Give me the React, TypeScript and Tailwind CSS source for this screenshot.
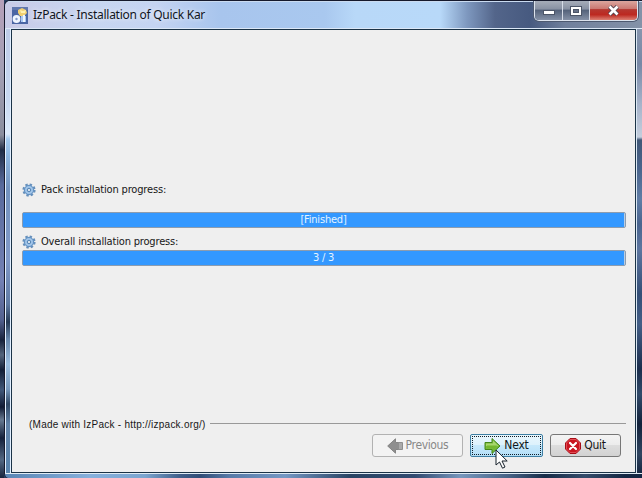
import React from 'react';

const uiFont = "font-['DejaVu_Sans_Condensed','DejaVu_Sans',sans-serif]";

function AppIcon() {
  return (
    <svg width="16" height="17" viewBox="0 0 16 17" className="shrink-0">
      <rect width="16" height="17" fill="#4a66a4" />
      <path d="M0 0h16v3H0z" fill="#6178ae" />
      <path d="M6 3l4-2 4 2 1 3-3 3H8L6 6z" fill="#f0cf72" />
      <path d="M8 3l3 1 3-1-1 3H9z" fill="#fff0ae" />
      <circle cx="4.5" cy="12" r="3.9" fill="#eef5ff" />
      <circle cx="4.5" cy="12" r="1.2" fill="#829bcb" />
      <path d="M9 9h5v6H9z" fill="#a9c8f2" />
      <path d="M11 8h2v7h-2z" fill="#edf6ff" />
    </svg>
  );
}

function Gear() {
  return (
    <svg width="14" height="14" viewBox="0 0 14 14" className="shrink-0">
      <circle cx="7" cy="7" r="5.6" fill="none" stroke="#6790bb" strokeWidth="2" strokeDasharray="2.4 2" />
      <circle cx="7" cy="7" r="4.7" fill="#91b9e2" stroke="#5c8dc0" strokeWidth="1" />
      <circle cx="7" cy="7" r="3.1" fill="none" stroke="#a9caeb" strokeWidth="1" />
      <circle cx="7" cy="7" r="1.7" fill="#d3e0ec" stroke="#5b88b6" strokeWidth="1" />
    </svg>
  );
}

function Progress({ children }: { children: React.ReactNode }) {
  return (
    <div className="h-4 rounded-[2px] border border-[#8c9caf] bg-[#b9cfe6] pr-px">
      <div className={`flex h-full items-center justify-center bg-[#3398ff] text-[11px] leading-[14px] tracking-[-0.2px] text-[#e4f4ff] ${uiFont}`}>
        <span className="-mt-px">{children}</span>
      </div>
    </div>
  );
}

function TitleBar() {
  return (
    <header className="flex h-[27px] shrink-0 justify-between border-b border-[#dce8f7] bg-[linear-gradient(90deg,#c9cbe7_0px,#c7d6f1_90px,#c5d4f2_150px,#a8c5ed_215px,#a9c8ef_320px,#b8d8f8_350px,#b8d9f9_435px,#7e98bf_462px,#53658a_490px,#475a80_525px,#70809c_560px,#8492a8_636px)]">
      <div className="flex items-start pl-[7px]">
        <div className="mt-[5px]"><AppIcon /></div>
        <span className="ml-[5px] mt-[4px] whitespace-nowrap font-['Noto_Sans',sans-serif] text-[12px] leading-[18px] tracking-[-0.27px] text-[#10151d] [text-shadow:0_0_5px_#fff]">IzPack - Installation of Quick Kar</span>
      </div>
      <div className="-mt-px mr-[4px] flex h-[20px] overflow-hidden rounded-b-[5px] border border-t-0 border-[#dce3ed] shadow-[0_0_0_1px_#4d5970]">
        <div className="flex w-[28px] items-center justify-center border-r border-[#d6dce7] bg-[linear-gradient(#a6adb9_0%,#8790a2_44%,#526078_46%,#8591a6_100%)]">
          <svg width="12" height="6" className="mt-[5px]"><rect x=".5" y=".5" width="11" height="4" fill="#fff" stroke="#4d5668" /></svg>
        </div>
        <div className="flex w-[27px] items-center justify-center border-r border-[#d6dce7] bg-[linear-gradient(#a6adb9_0%,#8790a2_44%,#526078_46%,#8591a6_100%)]">
          <svg width="12" height="10"><rect x=".5" y=".5" width="11" height="9" fill="#fff" stroke="#4d5668" /><rect x="3.5" y="3.5" width="5" height="3" fill="#667187" stroke="#4d5668" /></svg>
        </div>
        <div className="flex w-[47px] items-center justify-center bg-[linear-gradient(#dba69e_0%,#ca7770_42%,#b53730_45%,#bd2921_72%,#dc8175_100%)]">
          <svg width="13" height="11" viewBox="0 0 13 11"><path d="M2.5 1.5l8 8M10.5 1.5l-8 8" stroke="#51444f" strokeWidth="4.5" /><path d="M2.5 1.5l8 8M10.5 1.5l-8 8" stroke="#fff" strokeWidth="2.7" /></svg>
        </div>
      </div>
    </header>
  );
}

function Arrow({ left = false }: { left?: boolean }) {
  return (
    <svg width="17" height="16" viewBox="0 0 17 16" className="shrink-0">
      {left ? (
        <><path d="M.7 8L8.5.8V4.5H12v7H8.5v3.7z" fill="#8e8e8e" stroke="#858585" strokeLinejoin="round" /><path d="M11.5 4.5h4v7h-4z" fill="#aaa" stroke="#8e8e8e" /></>
      ) : (
        <><path d="M1 4.5h7v-4L16 8l-8 7.5v-4H1z" fill="#76b93b" stroke="#438719" strokeLinejoin="round" /><path d="M2 5.5h7v-3L14.5 8H2z" fill="#a7d66d" /><path d="M3 7.5h10L9.5 12v-2H3z" fill="#73b72c" /></>
      )}
    </svg>
  );
}

export default function App() {
  return (
    <main className="relative flex h-[478px] w-[642px] overflow-hidden bg-[#263c60]">
      <div className="w-[4px] shrink-0 bg-[linear-gradient(#b6a0ba_0px,#a39fb4_70px,#8a8e9e_135px,#202d46_150px,#586a9c_185px,#7481b4_280px,#52608e_320px,#18233c_340px,#53647c_355px,#121f38_370px,#405678_390px,#111b35_407px,#667890_420px,#15213c_438px,#526681_460px,#18243d_478px)]" />
      <section className="flex min-w-0 flex-1 flex-col overflow-hidden rounded-tl-[6px] rounded-bl-[5px] border-l border-t border-[#15192c] bg-[#8fa9cd]">
        <div className="h-px shrink-0 bg-[#cadbf0]" />
        <TitleBar />
        <div className="flex h-[444px] shrink-0">
          <div className="w-[6px] shrink-0 border-x border-[#e2efff] bg-[linear-gradient(#becbe8_0px,#c7d8f1_70px,#dceafa_105px,#a4caef_110px,#8bb4df_128px,#7393bf_160px,#8199c8_230px,#607ba4_275px,#273b57_293px,#6787ab_310px,#9cbfe1_335px,#7798bd_360px,#314967_375px,#6283a9_395px,#5984ae_444px)]" />
          <div className="flex w-[625px] shrink-0 flex-col border border-[#1b3347] bg-[#efefef]">
            <div className="flex h-full flex-col pl-[10px] pr-[9px] pt-[152px]">
              <div className={`flex h-[15px] items-center gap-[5px] text-[11px] leading-[15px] text-[#171717] ${uiFont}`}><Gear /><span className="tracking-[-0.17px]">Pack installation progress:</span></div>
              <div className="mt-[15px]"><Progress>[Finished]</Progress></div>
              <div className={`mt-[6px] flex h-[15px] items-center gap-[5px] text-[11px] leading-[15px] text-[#171717] ${uiFont}`}><Gear /><span className="tracking-[-0.17px]">Overall installation progress:</span></div>
              <div className="mt-px"><Progress>3 / 3</Progress></div>
              <div className="mt-[150px] flex h-[16px] items-center pl-[7px] font-['Liberation_Sans',sans-serif] text-[10px] text-[#171717]">
                <span className="whitespace-nowrap tracking-[0.24px]">(Made with IzPack - http://izpack.org/)</span>
                <div className="-mt-px ml-[4px] h-px flex-1 bg-[#999]" />
              </div>
              <div className={`mt-[2px] flex justify-end pr-[5px] text-[12px] leading-[20px] ${uiFont}`}>
                <button className="flex h-[23px] w-[91px] items-center justify-center gap-[2px] rounded-[3px] border border-[#b2b2b2] bg-[#f3f3f3] text-[#888]"><Arrow left /><span className="-mt-[2px] tracking-[-0.35px]">Previous</span></button>
                <button className="ml-[7px] flex h-[23px] w-[73px] items-center justify-center rounded-[2px] border border-[#3f7fa3] bg-[linear-gradient(#e9f6fd_0%,#dcf1fc_48%,#c6e8fb_50%,#b4dff8_100%)] p-px text-[#101820]"><span className="flex h-full w-full items-center justify-center gap-[3px] border border-dotted border-[#101c26]"><Arrow /><span className="-mt-[2px] tracking-[-0.2px]">Next</span></span></button>
                <button className="ml-[7px] flex h-[23px] w-[71px] items-center justify-center gap-[3px] rounded-[3px] border border-[#777] bg-[linear-gradient(#f4f4f4_0%,#ececec_48%,#dddddd_50%,#d2d2d2_100%)] text-[#171717]">
                  <svg width="16" height="16" viewBox="0 0 16 16"><path d="M5 .5h6L15.5 5v6L11 15.5H5L.5 11V5z" fill="#c91520" stroke="#a60d16" /><path d="M5 1.5h6L14.5 5v6L11 14.5H5L1.5 11V5z" fill="none" stroke="#e14c54" /><path d="M5 5l6 6M11 5l-6 6" stroke="#fff" strokeWidth="2.2" strokeLinecap="round" /></svg>
                  <span className="-mt-[2px] tracking-[-0.3px]">Quit</span>
                </button>
              </div>
            </div>
          </div>
          <div className="flex-1 border-l border-[#dce9f4] bg-[linear-gradient(#8795ad_0px,#7788a6_35px,#a6b3ca_75px,#c4cedd_108px,#405777_111px,#4a658d_140px,#607da6_170px,#4a658f_195px,#5d76a0_220px,#344f77_265px,#445f87_295px,#1b2e4d_340px,#314a6a_365px,#12223b_395px,#304561_425px,#172842_444px)]" />
        </div>
        <div className="flex-1 border-t border-[#dfebf4] bg-[linear-gradient(90deg,#5985b4_0px,#86b0dc_85px,#7ba5cf_140px,#405f8a_175px,#304d77_195px,#587ba8_225px,#7598c4_280px,#294464_345px,#324b71_410px,#7797bd_456px,#456184_505px,#172c48_540px,#354d6c_580px,#142743_620px)]" />
      </section>
      <svg width="14" height="21" viewBox="0 0 14 21" className="absolute left-[495px] top-[449px]">
        <path d="M1 1v15l3.5-3 3 6.2 2.5-1.2-3-6h5.2z" fill="#fff" stroke="#17212b" strokeLinejoin="round" />
      </svg>
    </main>
  );
}
